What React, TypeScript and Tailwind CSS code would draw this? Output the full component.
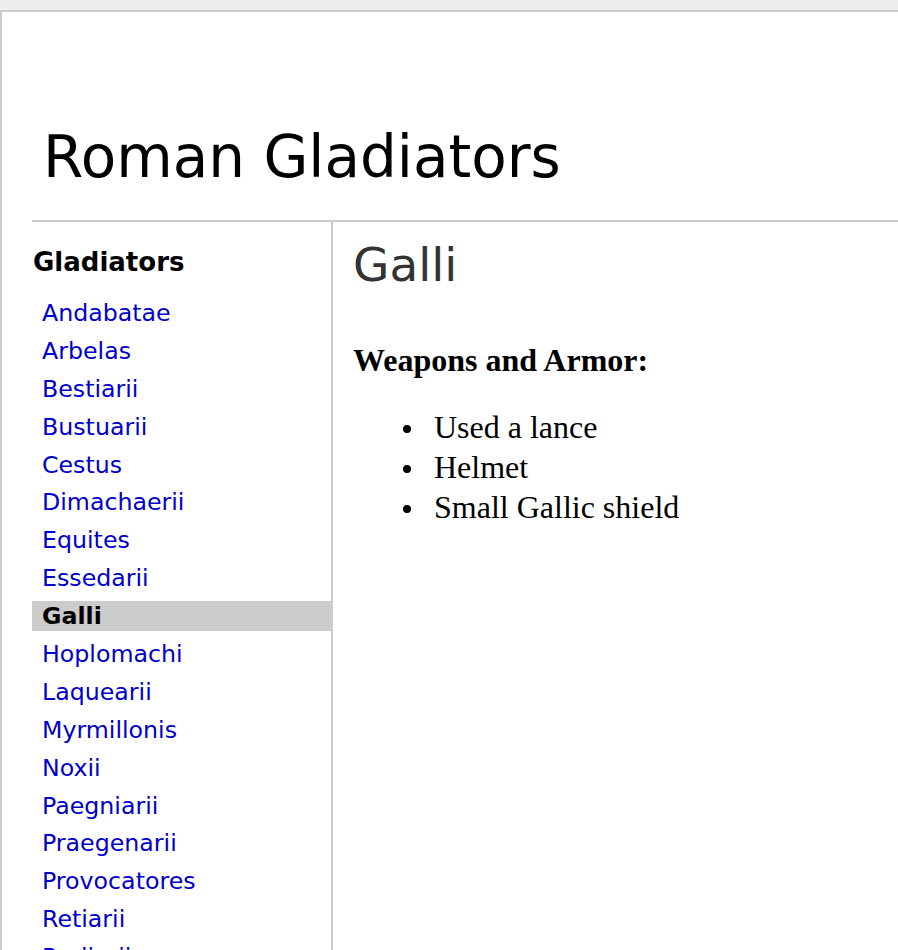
const GLADIATORS = [
  'Andabatae',
  'Arbelas',
  'Bestiarii',
  'Bustuarii',
  'Cestus',
  'Dimachaerii',
  'Equites',
  'Essedarii',
  'Galli',
  'Hoplomachi',
  'Laquearii',
  'Myrmillonis',
  'Noxii',
  'Paegniarii',
  'Praegenarii',
  'Provocatores',
  'Retiarii',
  'Rudiarii',
  'Sagittarii',
  'Samnites',
  'Secutores',
  'Thraeces',
  'Velites',
]

const ACTIVE = 'Galli'

const GEAR = ['Used a lance', 'Helmet', 'Small Gallic shield']

export default function App() {
  return (
    <div className="min-h-screen bg-[#eeeeee] pt-[10px] font-['DejaVu_Sans',sans-serif]">
      <div className="min-h-[940px] bg-white border-t-2 border-l-2 border-[#cccccc] pl-[30px]">
        {/* Page title */}
        <header className="pt-[111px] pb-[29px]">
          <h1 className="ml-[11px] text-[58px] leading-[68px] text-black">Roman Gladiators</h1>
        </header>

        <div className="flex border-t-2 border-[#cccccc]">
          {/* Sidebar */}
          <nav className="w-[301px] shrink-0 border-r-2 border-[#cccccc] pt-[26px]">
            <h2 className="mb-[21px] pl-[1px] text-[26px] font-bold leading-[29px] text-black">Gladiators</h2>
            <ul className="flex flex-col gap-[7.9px]">
              {GLADIATORS.map((name) =>
                name === ACTIVE ? (
                  <li key={name} className="h-[30px] bg-[#cccccc] pl-[10px] text-[23.7px] font-bold leading-[30px] text-black">
                    {name}
                  </li>
                ) : (
                  <li key={name} className="h-[30px] pl-[10px] text-[23.7px] leading-[30px]">
                    <a href="#" className="text-[#0000cc]">
                      {name}
                    </a>
                  </li>
                ),
              )}
            </ul>
          </nav>

          {/* Detail */}
          <main className="flex-1 pl-[20px] pt-[15px]">
            <h1 className="text-[47px] leading-[55px] text-[#333333]">Galli</h1>
            <h3 className="mt-[50px] font-['Liberation_Serif',serif] text-[32px] font-bold leading-[37px] text-black">
              Weapons and Armor:
            </h3>
            <ul className="mt-[28px] pl-[50px] font-['Liberation_Serif',serif] text-[32px] leading-[40px] text-black">
              {GEAR.map((item) => (
                <li key={item} className="flex items-start">
                  <span className="mt-[18px] mr-[24px] h-[8px] w-[8px] shrink-0 rounded-full bg-black" />
                  <span className="-ml-[1px]">{item}</span>
                </li>
              ))}
            </ul>
          </main>
        </div>
      </div>
    </div>
  )
}
